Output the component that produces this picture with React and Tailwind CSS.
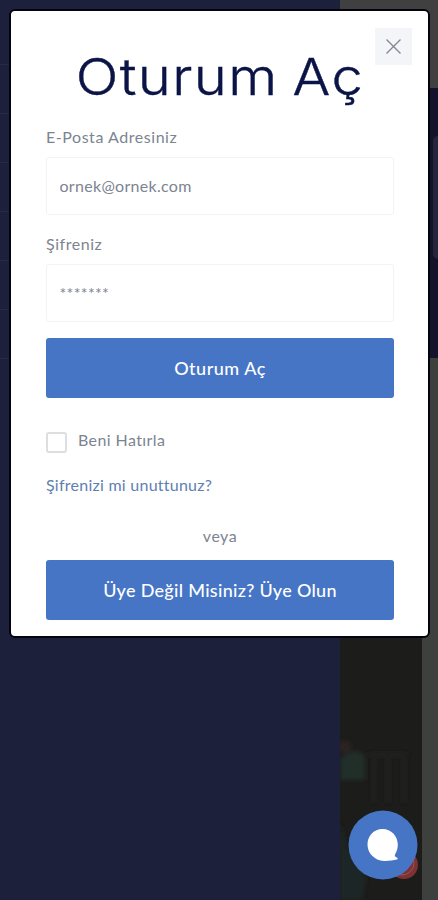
import React, { useState } from 'react';

const menuRows = [0, 1, 2, 3, 4, 5, 6];

function PageBackdrop() {
  return (
    <div className="flex h-[900px] w-full bg-[#1d203b]">
      {/* Side menu */}
      <div className="w-[340px] shrink-0 pt-[16px]">
        {menuRows.map((row) => (
          <div key={row} className="h-[49px] border-b border-[#262a43]" />
        ))}
      </div>

      {/* Dimmed page content */}
      <div className="flex flex-1 flex-col bg-[#3e403e]">
        <div className="h-[88px] bg-[#404040]" />
        <div className="flex h-[270px] justify-end bg-[#13132b] pt-12">
          <div className="h-[123px] w-[5px] rounded-l-md bg-[#25253c]" />
        </div>
        <div className="h-[200px]" />
        <div className="w-[82px] flex-1 overflow-hidden bg-[#1c1c1a]">
          <svg width="82" height="342" viewBox="0 0 82 342" aria-hidden="true">
            <defs>
              <filter id="soft" x="-30%" y="-30%" width="160%" height="160%">
                <feGaussianBlur stdDeviation="2" />
              </filter>
            </defs>
            <g filter="url(#soft)">
              <circle cx="5" cy="189" r="7" fill="#2a2120" />
              <path d="M0 200 L14 193 Q25 194 25 202 V222 H0Z" fill="#232f2c" />
              <path d="M28 197 H68 M34 200 V245 M48 200 V245 M64 200 V245" stroke="#20201e" strokeWidth="3" fill="none" />
              <path d="M0 265 Q6 280 7 292 Q22 300 26 320 L22 342 H0Z" fill="#1b2726" />
            </g>
          </svg>
        </div>
      </div>
    </div>
  );
}

function ChatButton() {
  return (
    <button type="button" aria-label="Chat" className="absolute top-[809px] left-[347px] h-[72px] w-[72px] cursor-pointer">
      <svg width="72" height="72" viewBox="0 0 72 72">
        <circle cx="57" cy="56" r="14" fill="#7e3234" />
        <circle cx="55" cy="54" r="12" fill="none" stroke="#9c5252" />
        <circle cx="36" cy="36" r="34.5" fill="#4675c5" />
        <path
          d="M35.500 20c-8.500 0-15 6.800-15 15.500S27.400 51.500 37 51.900c4.500.1 9.500-.3 12.700-1.300 1.400-.5 1.300-1.800.1-2.200-1.600-.4-2.400-1.300-1.800-2.800 1.800-2.800 2.800-6.300 2.800-10C50.800 27 44.200 20 35.500 20z"
          fill="#fff"
        />
      </svg>
    </button>
  );
}

function Field({ id, label, type, placeholder, className }) {
  return (
    <div className={className}>
      <label htmlFor={id} className="block h-5 text-base leading-5 tracking-[0.55px] text-[#7c8491]">{label}</label>
      <input
        id={id}
        type={type}
        placeholder={placeholder}
        className="mt-[10px] block h-[58px] w-full rounded-[3px] border border-[#f2f3f5] bg-white px-[12.5px] pb-[2px] text-base tracking-[0.3px] outline-none placeholder:text-[#7c8491]"
      />
    </div>
  );
}

function LoginModal() {
  const [remember, setRemember] = useState(false);

  return (
    <div className="absolute top-[9px] left-[9px] h-[629px] w-[421px] rounded-md border-2 border-[#04040f] bg-white pr-[34px] pl-[35px] font-['Lato',sans-serif]">
      <button
        type="button"
        aria-label="Kapat"
        className="absolute top-[17px] right-[16px] flex h-[37px] w-[37px] cursor-pointer items-center justify-center bg-[#f3f5f8]"
      >
        <svg width="16" height="16" viewBox="0 0 16 16" fill="none" stroke="#838897" strokeWidth="1.4">
          <path d="M0.500 0.500 L14.500 14.500 M14.500 0.500 L0.500 14.500" />
        </svg>
      </button>

      <h1 className="mt-[33px] h-[66px] origin-center scale-x-[1.1] text-center font-['Inter',sans-serif] text-[51px] leading-[66px] font-light whitespace-nowrap tracking-[1.3px] [word-spacing:-3px] text-[#0a1446] [-webkit-text-stroke:0.4px_#0a1446]">
        Oturum Aç
      </h1>

      <Field id="email" label="E-Posta Adresiniz" type="email" placeholder="ornek@ornek.com" className="mt-[17px]" />
      <Field id="password" label="Şifreniz" type="password" placeholder="*******" className="mt-[19px]" />

      <button type="button" className="mt-4 block h-[60px] w-full cursor-pointer rounded-[3px] bg-[#4675c5] text-lg font-medium tracking-[0.5px] text-white">
        Oturum Aç
      </button>

      <label className="mt-[31px] flex h-6 cursor-pointer items-center text-base tracking-[0.4px] text-[#7c8491]">
        <input
          type="checkbox"
          checked={remember}
          onChange={(e) => setRemember(e.target.checked)}
          className="relative top-px mr-[11px] h-[21px] w-[21px] appearance-none rounded-[3px] border-2 border-[#dcdee1] bg-white checked:bg-[#4675c5]"
        />
        <span className="relative -top-px">Beni Hatırla</span>
      </label>

      <a href="#" className="mt-5 block h-6 text-base leading-6 tracking-[0.25px] text-[#5d80b0]">
        Şifrenizi mi unuttunuz?
      </a>

      <div className="mt-[27px] h-6 text-center text-base leading-6 tracking-[0.5px] text-[#7c8491]">veya</div>

      <button type="button" className="mt-[12px] block h-[60px] w-full cursor-pointer rounded-[3px] bg-[#4675c5] text-lg font-medium tracking-[0.3px] text-white">
        Üye Değil Misiniz? Üye Olun
      </button>
    </div>
  );
}

function App() {
  return (
    <main className="relative h-[900px] w-full overflow-hidden">
      <PageBackdrop />
      <LoginModal />
      <ChatButton />
    </main>
  );
}

export default App;
